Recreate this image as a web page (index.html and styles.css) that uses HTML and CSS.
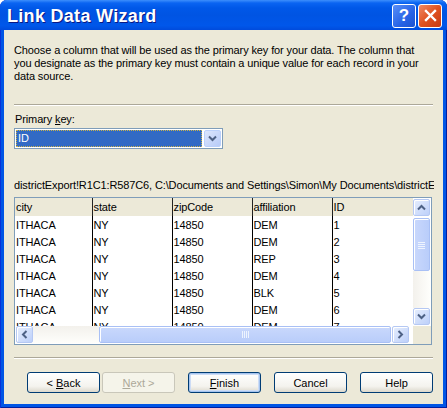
FILE: index.html
```html
<!DOCTYPE html>
<html>
<head lang="en">
    <meta charset="UTF-8">
    <title>Link Data Wizard</title>
    <link rel="stylesheet" href="styles.css">
</head>
<body>
<div class="window">
    <div class="titlebar">
        <span class="title">Link Data Wizard</span>
        <div class="caption">
            <span class="cap help">?</span>
            <span class="cap close">
                <svg width="13" height="13" viewBox="0 0 13 13"><path d="M2 2L11 11M11 2L2 11" stroke="#fff" stroke-width="2.4" stroke-linecap="square"/></svg>
            </span>
        </div>
    </div>

    <div class="content">
        <p class="intro">Choose a column that will be used as the primary key for your data. The column that you designate as the primary key must contain a unique value for each record in your data source.</p>
        <div class="sep"></div>

        <label class="field-label">Primary <u>k</u>ey:</label>
        <div class="combo">
            <span class="combo-value">ID</span>
            <span class="combo-btn">
                <svg width="9" height="7" viewBox="0 0 9 7"><path d="M1 1.5L4.5 5L8 1.5" fill="none" stroke="#4d6185" stroke-width="2"/></svg>
            </span>
        </div>

        <div class="source">districtExport!R1C1:R587C6, C:\Documents and Settings\Simon\My Documents\districtExport.xls</div>

        <div class="grid">
            <div class="grid-view">
                <table>
                    <tr class="head">
                        <td class="c1">city</td><td class="c2">state</td><td class="c3">zipCode</td><td class="c4">affiliation</td><td class="c5">ID</td>
                    </tr>
                    <tr><td>ITHACA</td><td>NY</td><td>14850</td><td>DEM</td><td>1</td></tr>
                    <tr><td>ITHACA</td><td>NY</td><td>14850</td><td>DEM</td><td>2</td></tr>
                    <tr><td>ITHACA</td><td>NY</td><td>14850</td><td>REP</td><td>3</td></tr>
                    <tr><td>ITHACA</td><td>NY</td><td>14850</td><td>DEM</td><td>4</td></tr>
                    <tr><td>ITHACA</td><td>NY</td><td>14850</td><td>BLK</td><td>5</td></tr>
                    <tr><td>ITHACA</td><td>NY</td><td>14850</td><td>DEM</td><td>6</td></tr>
                    <tr><td>ITHACA</td><td>NY</td><td>14850</td><td>DEM</td><td>7</td></tr>
                </table>
            </div>
            <div class="vscroll">
                <span class="sb-btn"><svg width="9" height="7" viewBox="0 0 9 7"><path d="M1 5.5L4.5 2L8 5.5" fill="none" stroke="#4d6185" stroke-width="2"/></svg></span>
                <span class="sb-thumb v">
                    <svg width="7" height="8" viewBox="0 0 7 8"><path d="M0 1.5H7M0 3.5H7M0 5.5H7M0 7.5H7" stroke="#eef4fe"/></svg>
                </span>
                <span class="sb-track v"></span>
                <span class="sb-btn"><svg width="9" height="7" viewBox="0 0 9 7"><path d="M1 1.5L4.5 5L8 1.5" fill="none" stroke="#4d6185" stroke-width="2"/></svg></span>
            </div>
            <div class="hscroll">
                <span class="sb-btn"><svg width="7" height="9" viewBox="0 0 7 9"><path d="M5.5 1L2 4.5L5.5 8" fill="none" stroke="#4d6185" stroke-width="2"/></svg></span>
                <span class="sb-track h"></span>
                <span class="sb-thumb h">
                    <svg width="8" height="7" viewBox="0 0 8 7"><path d="M1.5 0V7M3.5 0V7M5.5 0V7M7.5 0V7" stroke="#eef4fe"/></svg>
                </span>
                <span class="sb-btn"><svg width="7" height="9" viewBox="0 0 7 9"><path d="M1.5 1L5 4.5L1.5 8" fill="none" stroke="#4d6185" stroke-width="2"/></svg></span>
            </div>
            <div class="corner"></div>
        </div>

        <div class="sep low"></div>

        <div class="buttons">
            <div class="nav">
                <button class="btn">&lt; <u>B</u>ack</button>
                <button class="btn" disabled><u>N</u>ext &gt;</button>
            </div>
            <button class="btn default"><u>F</u>inish</button>
            <button class="btn">Cancel</button>
            <button class="btn">Help</button>
        </div>
    </div>
</div>
</body>
</html>
```

FILE: styles.css
```css
* {
    margin: 0;
    padding: 0;
    box-sizing: border-box;
}
body {
    width: 447px;
    height: 408px;
    overflow: hidden;
    font-family: "Liberation Sans", Arial, sans-serif;
    font-size: 11px;
    color: #000;
}
.window {
    width: 447px;
    height: 408px;
    background: #0055e5;
    display: flex;
    flex-direction: column;
    padding: 0 4px 4px 4px;
    border-radius: 7px 7px 0 0;
    box-shadow: inset 1px 0 #0831d9, inset -1px 0 #001ea0, inset 0 -1px #001ea0;
}

/* title bar */
.titlebar {
    height: 30px;
    margin: 0 -4px;
    padding: 0 5px 0 7px;
    display: flex;
    align-items: center;
    justify-content: space-between;
    border-radius: 7px 7px 0 0;
    background: linear-gradient(#3d8ffc 0, #0a64f2 3px, #0058e8 8px, #0054e3 50%, #0057ea 85%, #004bdc 100%);
}
.title {
    color: #fff;
    font-family: "Liberation Sans", Arial, sans-serif;
    font-weight: bold;
    font-size: 18px;
    letter-spacing: 0.3px;
    padding-top: 2px;
    text-shadow: 1px 1px #0a1883;
}
.caption {
    display: flex;
    gap: 2px;
    padding-top: 1px;
}
.cap {
    width: 24px;
    height: 24px;
    border: 1px solid #fff;
    border-radius: 3px;
    display: flex;
    align-items: center;
    justify-content: center;
}
.help {
    background: linear-gradient(135deg, #5a8ff7, #2663e6 60%, #1d52d0);
    color: #fff;
    font-weight: bold;
    font-size: 17px;
}
.close {
    background: linear-gradient(135deg, #ef8a66, #e0521f 50%, #c73a12);
}

/* dialog body */
.content {
    flex: 1;
    background: #ece9d8;
    padding: 0 10px;
    letter-spacing: -0.12px;
}
.intro {
    margin-top: 14px;
    line-height: 13px;
    width: 418px;
}
.sep {
    height: 2px;
    margin-top: 21px;
    border-top: 1px solid #aca899;
    border-bottom: 1px solid #fff;
}
.sep.low {
    margin-top: 12px;
}
.field-label {
    display: block;
    margin-top: 7px;
    line-height: 13px;
    padding-left: 1px;
}
.combo {
    margin-top: 2px;
    width: 209px;
    height: 21px;
    border: 1px solid #7f9db9;
    background: #fff;
    display: flex;
    align-items: center;
    padding: 1px;
}
.combo-value {
    width: 187px;
    height: 17px;
    background: #316ac5;
    color: #fff;
    border: 1px dotted #c9b24a;
    line-height: 15px;
    padding-left: 1px;
}
.combo-btn {
    margin-left: 2px;
    width: 17px;
    height: 17px;
    border: 1px solid #bad0fb;
    border-radius: 2px;
    background: linear-gradient(135deg, #dce6fd, #b7cbf8);
    display: flex;
    align-items: center;
    justify-content: center;
}
.source {
    margin-top: 30px;
    line-height: 13px;
    white-space: nowrap;
    overflow: hidden;
    width: 420px;
}

/* data grid */
.grid {
    margin-top: 5px;
    width: 418px;
    height: 148px;
    border: 1px solid #7f9db9;
    background: #fff;
    display: grid;
    grid-template-columns: 1fr 18px;
    grid-template-rows: 1fr 18px;
}
.grid-view {
    overflow: hidden;
}
table {
    border-collapse: collapse;
    table-layout: fixed;
    width: 398px;
}
td {
    height: 17px;
    padding: 0 0 0 1px;
    border-right: 1px solid #000;
    white-space: nowrap;
    overflow: hidden;
    vertical-align: middle;
}
td:last-child {
    border-right: none;
}
.head td {
    height: 18px;
    background: #ece9d8;
    border-right-color: #222;
}
.c1 { width: 77px; }
.c2 { width: 80px; }
.c3 { width: 80px; }
.c4 { width: 80px; }

.vscroll {
    display: flex;
    flex-direction: column;
    padding: 1px 1px 1px 0;
}
.hscroll {
    display: flex;
    padding: 0 0 1px 1px;
}
.corner {
    background: #ece9d8;
}
.sb-btn {
    flex: 0 0 17px;
    height: 17px;
    width: 17px;
    border: 1px solid #b5c8f3;
    border-radius: 2px;
    box-shadow: inset 1px 1px #fff;
    background: linear-gradient(135deg, #e6eefd, #bdd0fa);
    display: flex;
    align-items: center;
    justify-content: center;
}
.sb-thumb {
    border: 1px solid #a9c0f5;
    border-radius: 2px;
    box-shadow: inset 1px 1px #fff;
    display: flex;
    align-items: center;
    justify-content: center;
}
.sb-thumb.v {
    height: 53px;
    margin-top: 2px;
    background: linear-gradient(to right, #c9d8fc, #b9cdfa);
}
.sb-thumb.h {
    width: 292px;
    height: 17px;
    background: linear-gradient(#c9d8fc, #b9cdfa);
}
.sb-track.v {
    flex: 1;
    background: linear-gradient(to right, #f3f1ec, #fefefb);
}
.sb-track.h {
    width: 66px;
    height: 17px;
    background: linear-gradient(#f3f1ec, #fefefb);
}
.hscroll .sb-btn:last-child {
    margin-left: 1px;
}

/* buttons */
.buttons {
    margin-top: 13px;
    display: flex;
    justify-content: flex-end;
    gap: 13px;
}
.nav {
    display: flex;
    gap: 2px;
}
.btn {
    width: 73px;
    height: 21px;
    border: 1px solid #003c74;
    border-radius: 3px;
    background: linear-gradient(#fff, #f4f3ee 70%, #dcd8cc);
    font-family: "Liberation Sans", Arial, sans-serif;
    font-size: 11px;
    color: #000;
}
.btn.default {
    box-shadow: inset 0 0 0 1px #a5c4ef, inset 0 0 0 2px #cddcf5;
}
.btn:disabled {
    border-color: #c9c7ba;
    background: #f5f4ea;
    color: #aca899;
}
```
